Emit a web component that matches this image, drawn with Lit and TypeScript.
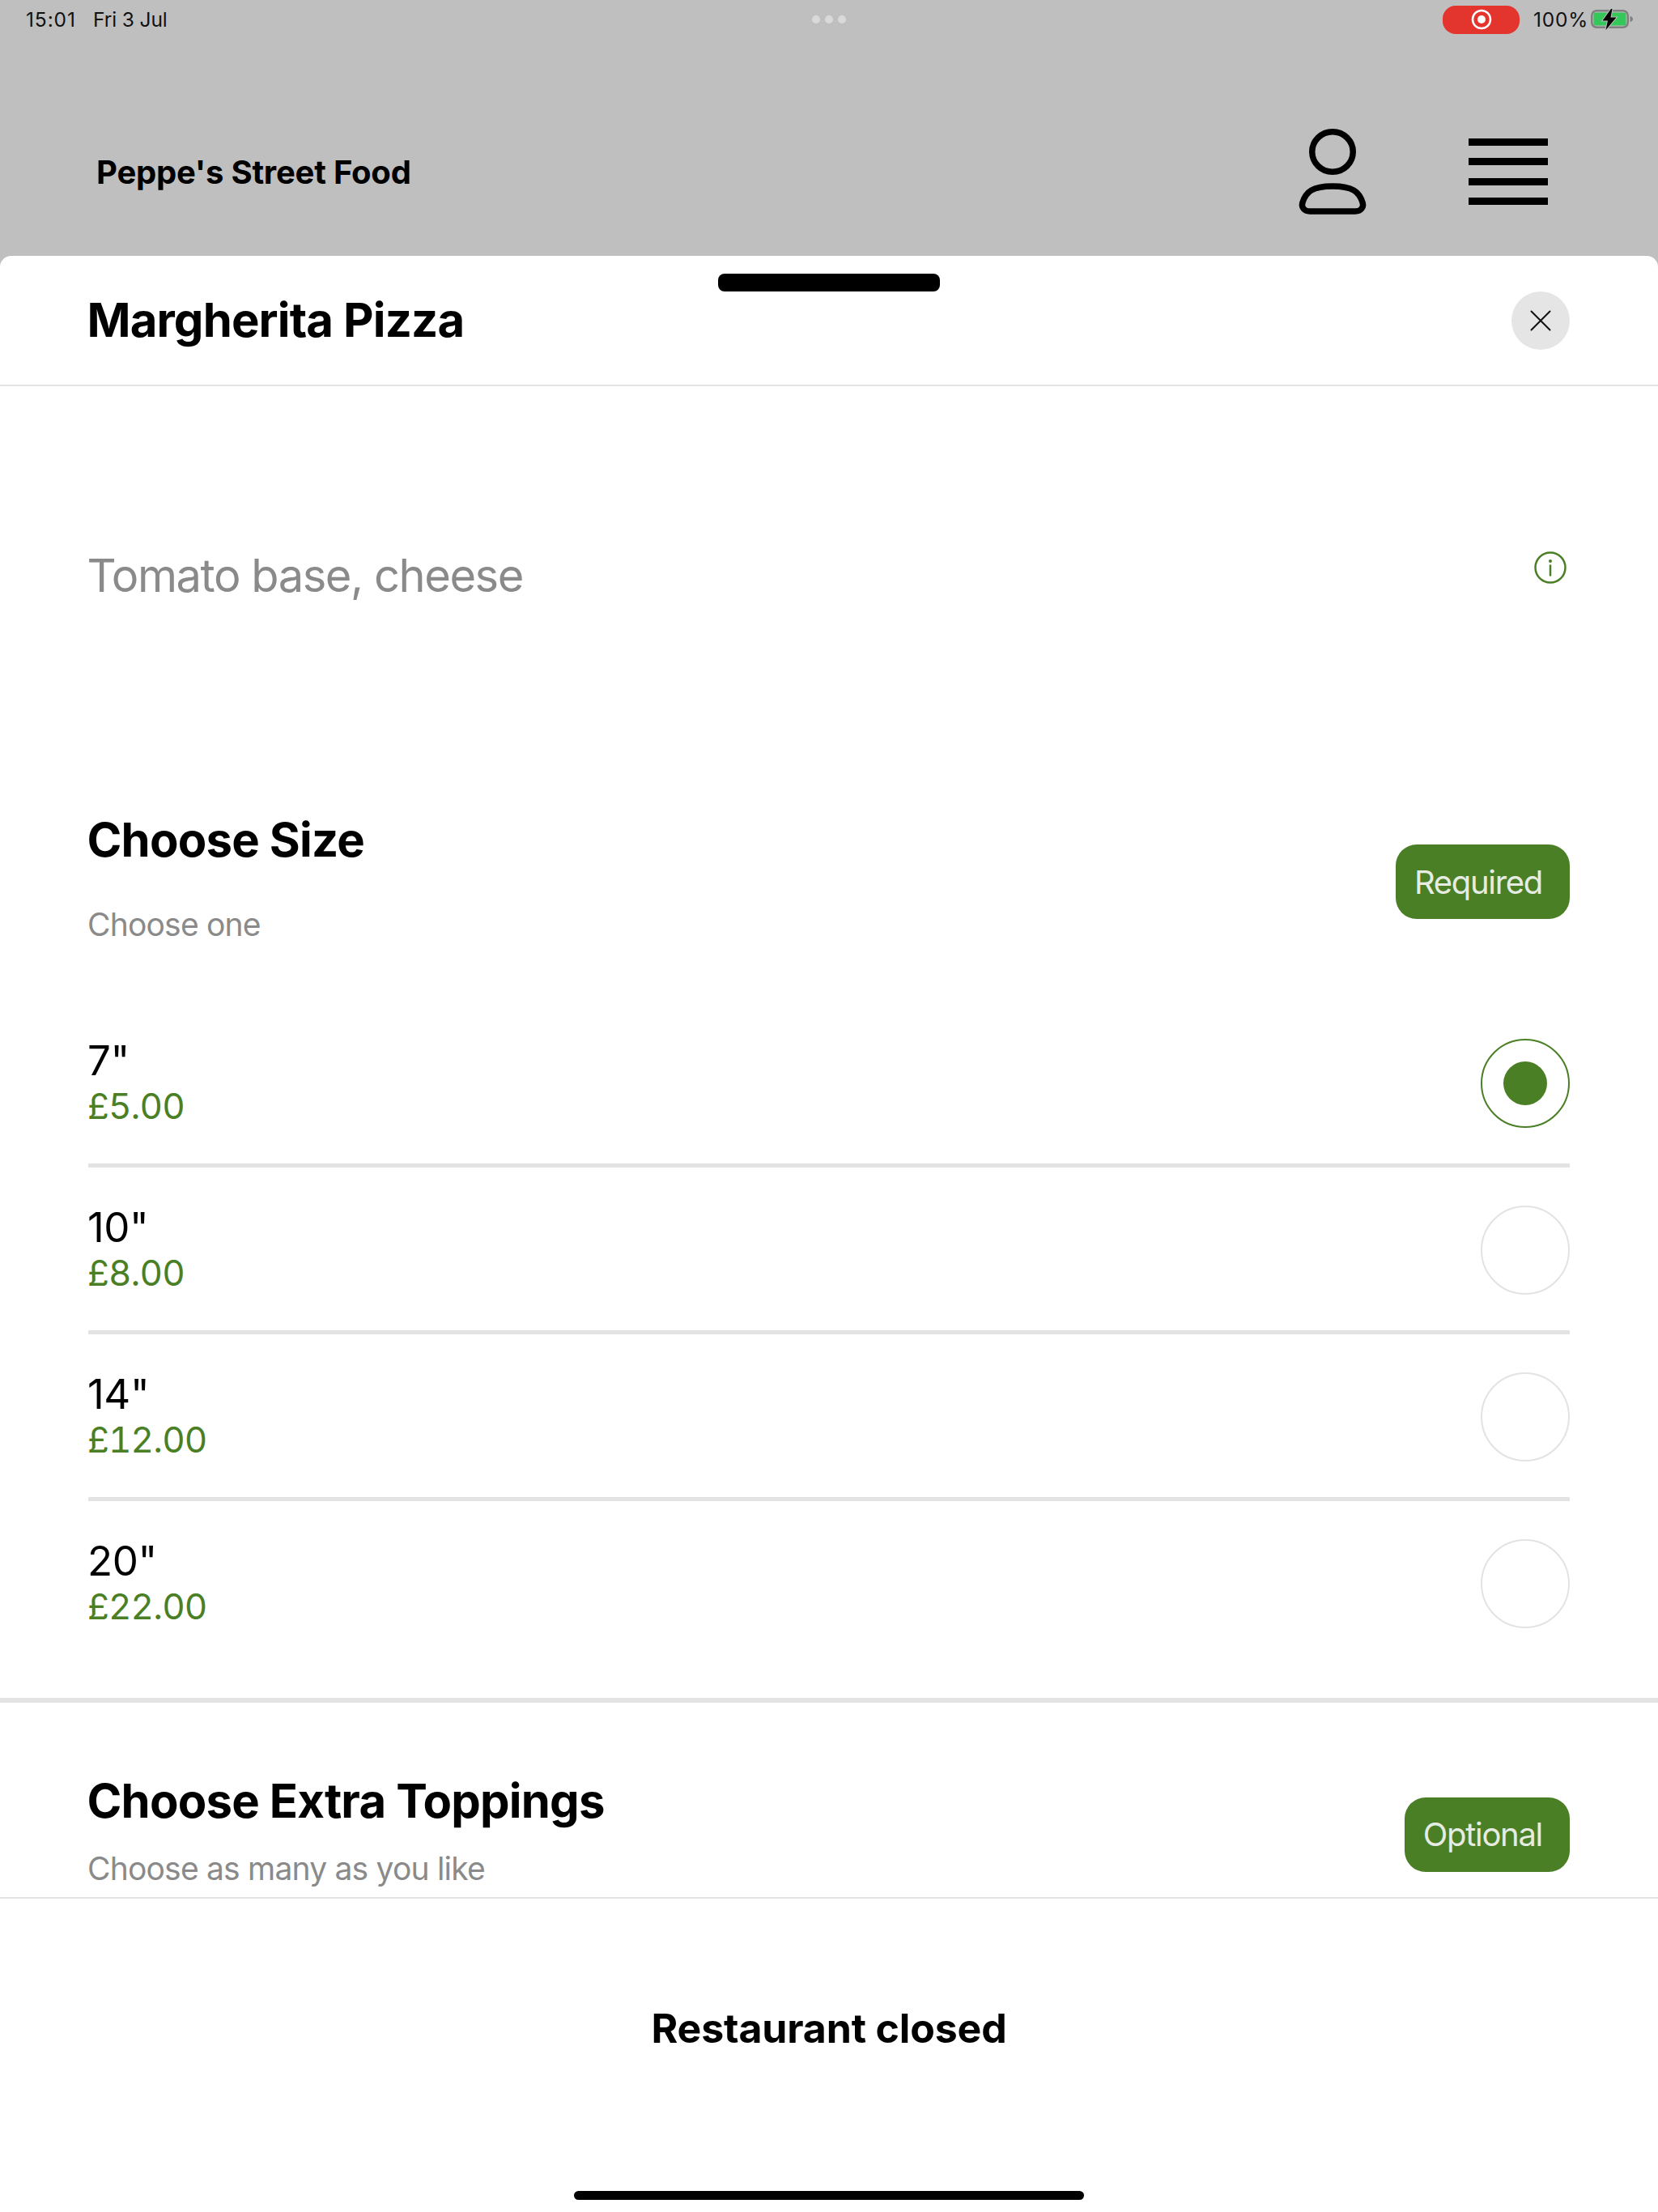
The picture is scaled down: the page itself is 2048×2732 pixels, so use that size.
import { LitElement, html, css } from "lit";
import { customElement } from "lit/decorators.js";

const SIZES = [
  { name: '7"', price: "£5.00", selected: true },
  { name: '10"', price: "£8.00", selected: false },
  { name: '14"', price: "£12.00", selected: false },
  { name: '20"', price: "£22.00", selected: false },
];

@customElement("app-root")
export class AppRoot extends LitElement {
  static styles = css`
    :host {
      display: flex;
      flex-direction: column;
      width: 2048px;
      height: 2732px;
      overflow: hidden;
      background: #bfbfbf;
      font-family: Inter, "Liberation Sans", sans-serif;
      color: #000;
    }
    .top { height: 316px; flex: none; position: relative; }
    .status {
      height: 48px;
      position: relative;
      display: flex;
      align-items: center;
      padding: 0 30px 0 32px;
      font-size: 24.5px;
      letter-spacing: -0.1px;
      color: #111;
    }
    .time { width: 83px; letter-spacing: 0.9px; }
    .dots {
      position: absolute;
      left: 1003px;
      top: 19px;
      display: flex;
      gap: 6px;
    }
    .dots i { width: 10px; height: 10px; border-radius: 50%; background: #d9d9d9; }
    .status-right { margin-left: auto; display: flex; align-items: center; }
    .rec {
      width: 95px;
      height: 35px;
      border-radius: 16px;
      background: #e3352d;
      display: flex;
      align-items: center;
      justify-content: center;
      margin-right: 17px;
    }
    .pct { width: 70px; letter-spacing: 0.8px; }
    .head {
      height: 268px;
      display: flex;
      align-items: center;
      padding: 60px 136px 0 119px;
      box-sizing: border-box;
    }
    .brand { font-size: 40px; font-weight: 700; flex: 1; letter-spacing: -0.2px; margin-top: 1px; }
    .user { margin-right: 126px; }
    .menu { display: flex; flex-direction: column; gap: 15.33px; width: 98px; }
    .menu i { height: 9px; background: #000; }

    .sheet {
      flex: 1;
      background: #fff;
      border-radius: 14px 14px 0 0;
      position: relative;
      display: flex;
      flex-direction: column;
      min-height: 0;
    }
    .handle {
      position: absolute;
      left: 887px;
      top: 22px;
      width: 274px;
      height: 22px;
      border-radius: 8px;
      background: #000;
    }
    .title-bar {
      height: 161px;
      box-sizing: border-box;
      border-bottom: 2px solid #e3e3e3;
      display: flex;
      align-items: center;
      justify-content: space-between;
      padding: 1px 109px 0;
      flex: none;
    }
    h1 { font-size: 58px; font-weight: 700; margin: -3px 0 0 -1.5px; letter-spacing: -0.85px; }
    .close {
      width: 72px;
      height: 72px;
      border-radius: 50%;
      background: #e5e5e5;
      display: flex;
      align-items: center;
      justify-content: center;
    }
    .scroll { flex: 1; min-height: 0; overflow: hidden; }
    .desc {
      height: 467px;
      display: flex;
      align-items: center;
      justify-content: space-between;
      padding: 0 113px 0 107.5px;
      box-sizing: border-box;
    }
    .desc span { font-size: 56px; color: #8a8a8a; letter-spacing: -1.45px; }
    .desc svg { margin-top: -19px; }
    .section { padding: 58px 109px 37px; }
    .section.second { padding-top: 86px; padding-bottom: 0; }
    .sec-head { display: flex; justify-content: space-between; align-items: center; }
    h2 { font-size: 58px; font-weight: 700; margin: 0 0 0 -1.5px; letter-spacing: -0.8px; line-height: 70px; }
    .sub { font-size: 39px; color: #8a8a8a; line-height: 50px; margin-top: 45px; letter-spacing: -0.8px; margin-left: -1px; }
    .second .sub { margin-top: 24px; }
    .pill {
      background: #4a7f25;
      color: #e6ece2;
      font-size: 40px;
      height: 92px;
      border-radius: 26px;
      display: flex;
      align-items: center;
      padding: 0 34px 0 23px;
      letter-spacing: -1.3px;
      margin-top: 9px;
    }
    .rows { margin-top: 69px; }
    .row {
      height: 206px;
      box-sizing: border-box;
      display: flex;
      align-items: center;
      justify-content: space-between;
      padding-top: 3px;
      border-bottom: 5px solid #e3e3e3;
    }
    .row:last-child { border-bottom-color: transparent; }
    .info { margin-bottom: 3px; }
    .name { font-size: 51px; line-height: 56px; letter-spacing: -0.4px; margin-bottom: 3px; margin-left: -1px; }
    .price { font-size: 44px; line-height: 50px; color: #4a7f25; font-variant-numeric: tabular-nums; letter-spacing: -0.9px; margin-left: -1px; }
    .radio {
      width: 110px;
      height: 110px;
      box-sizing: border-box;
      border-radius: 50%;
      border: 2px solid #e3e3e3;
      display: flex;
      align-items: center;
      justify-content: center;
    }
    .radio.on { border-color: #4a7f25; }
    .radio.on i { width: 54px; height: 54px; border-radius: 50%; background: #4a7f25; }
    .rule { height: 6px; background: #e3e3e3; }
    .foot {
      height: 389px;
      flex: none;
      box-sizing: border-box;
      border-top: 2px solid #e3e3e3;
      display: flex;
      flex-direction: column;
      align-items: center;
    }
    .closed { font-size: 50px; font-weight: 700; margin-top: 129px; letter-spacing: -0.15px; line-height: 62px; }
    .home {
      margin-top: auto;
      margin-bottom: 15px;
      width: 630px;
      height: 11px;
      border-radius: 6px;
      background: #000;
    }
  `;

  render() {
    return html`
      <div class="top">
        <div class="status">
          <span class="time">15:01</span><span>Fri 3 Jul</span>
          <div class="dots"><i></i><i></i><i></i></div>
          <div class="status-right">
            <div class="rec">
              <svg width="26" height="26" viewBox="0 0 26 26">
                <circle cx="13" cy="13" r="11" fill="none" stroke="#fff" stroke-width="2.5"/>
                <circle cx="13" cy="13" r="5" fill="#fff"/>
              </svg>
            </div>
            <span class="pct">100%</span>
            <svg width="54" height="26" viewBox="0 0 54 26">
              <rect x="2.250" y="2.250" width="44.500" height="20.500" rx="6" fill="none" stroke="#808080" stroke-width="2.500"/>
              <rect x="4.500" y="4.500" width="40" height="16" rx="2.500" fill="#34c759"/>
              <path d="M49.500 9c2.500.5 3.500 2 3.500 3.500s-1 3-3.500 3.500z" fill="#808080"/>
              <path d="M26 0L15.500 14.500H22L19.500 26L32.500 10.500H25.500L27.500 0Z" fill="#000" stroke="#bfbfbf" stroke-width="2" paint-order="stroke"/>
            </svg>
          </div>
        </div>
        <div class="head">
          <div class="brand">Peppe's Street Food</div>
          <svg class="user" width="84" height="106" viewBox="0 0 84 106" fill="none" stroke="#000" stroke-width="7.500">
            <ellipse cx="42" cy="28.500" rx="25.250" ry="24.750"/>
            <path d="M14 102H70C77 102 81 97 79 91C75 78 67 71 42 71C17 71 9 78 5 91C3 97 7 102 14 102Z"/>
          </svg>
          <div class="menu"><i></i><i></i><i></i><i></i></div>
        </div>
      </div>
      <div class="sheet">
        <div class="handle"></div>
        <div class="title-bar">
          <h1>Margherita Pizza</h1>
          <div class="close">
            <svg width="26" height="26" viewBox="0 0 26 26" stroke="#111" stroke-width="2" stroke-linecap="round">
              <path d="M1.500 1.500l23 23M24.500 1.500l-23 23"/>
            </svg>
          </div>
        </div>
        <div class="scroll">
          <div class="desc">
            <span>Tomato base, cheese</span>
            <svg width="40" height="40" viewBox="0 0 40 40" fill="none" stroke="#4a7f25" stroke-width="2.500">
              <circle cx="20" cy="20" r="18.500"/>
              <path d="M20 17.500v12" stroke-linecap="round"/>
              <circle cx="20" cy="12" r="2" fill="#4a7f25" stroke="none"/>
            </svg>
          </div>
          <div class="section">
            <div class="sec-head">
              <div>
                <h2>Choose Size</h2>
                <div class="sub">Choose one</div>
              </div>
              <div class="pill">Required</div>
            </div>
            <div class="rows">
              ${SIZES.map(
                (s) => html`
                  <div class="row">
                    <div class="info">
                      <div class="name">${s.name}</div>
                      <div class="price">${s.price}</div>
                    </div>
                    <div class="radio ${s.selected ? "on" : ""}">${s.selected ? html`<i></i>` : ""}</div>
                  </div>
                `
              )}
            </div>
          </div>
          <div class="rule"></div>
          <div class="section second">
            <div class="sec-head">
              <div>
                <h2>Choose Extra Toppings</h2>
                <div class="sub">Choose as many as you like</div>
              </div>
              <div class="pill">Optional</div>
            </div>
          </div>
        </div>
        <div class="foot">
          <div class="closed">Restaurant closed</div>
          <div class="home"></div>
        </div>
      </div>
    `;
  }
}
